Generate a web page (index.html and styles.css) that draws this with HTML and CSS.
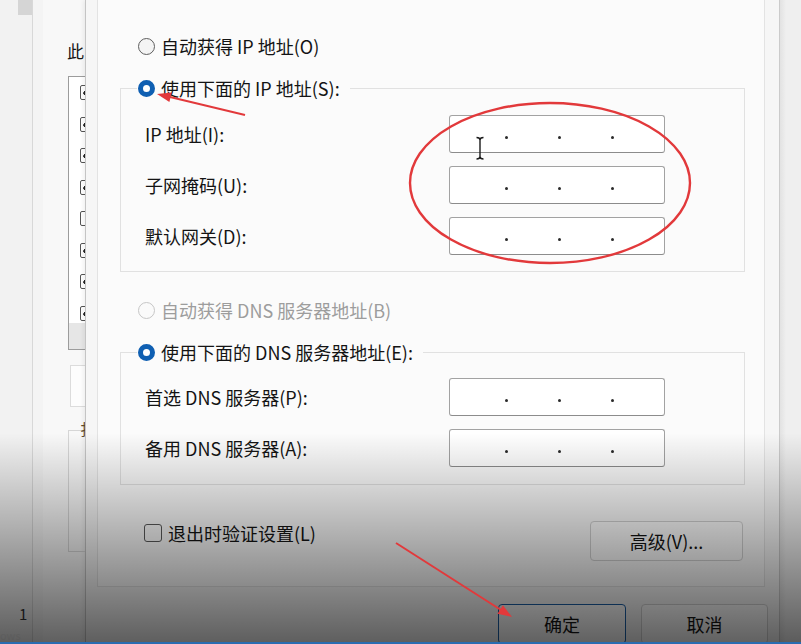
FILE: index.html
```html
<!DOCTYPE html>
<html lang="zh-CN">

<head>
    <meta charset="UTF-8">
    <title>Internet 协议版本 4 (TCP/IPv4) 属性</title>
    <link rel="stylesheet" href="styles.css">
</head>

<body>
    <div class="screen">
        <div class="main">
            <!-- window behind the dialog -->
            <div class="backwin">
                <div class="strip">
                    <span class="thumb"></span>
                    <span class="num">1</span>
                    <span class="ows">ows</span>
                </div>
                <div class="backpage">
                    <div class="backtitle">此</div>
                    <div class="backlist">
                        <span class="cb on"></span>
                        <span class="cb on"></span>
                        <span class="cb on"></span>
                        <span class="cb on"></span>
                        <span class="cb"></span>
                        <span class="cb on"></span>
                        <span class="cb on"></span>
                        <span class="cb on"></span>
                        <div class="hscroll"></div>
                    </div>
                    <div class="backbtn"></div>
                    <div class="backgroup"><span class="backglyph">扌</span></div>
                </div>
            </div>

            <div class="dialog">
                <div class="page">
                    <label class="opt"><span class="radio"></span>自动获得 IP 地址(O)</label>

                    <fieldset class="group">
                        <legend><label class="opt"><span class="radio on"></span>使用下面的 IP 地址(S):</label></legend>
                        <div class="rows">
                            <span class="lbl">IP 地址(I):</span>
                            <div class="ip"><span class="seg lead"></span><span class="dot"></span><span class="seg"></span><span class="dot"></span><span class="seg"></span><span class="dot"></span></div>
                            <span class="lbl">子网掩码(U):</span>
                            <div class="ip"><span class="seg lead"></span><span class="dot"></span><span class="seg"></span><span class="dot"></span><span class="seg"></span><span class="dot"></span></div>
                            <span class="lbl">默认网关(D):</span>
                            <div class="ip"><span class="seg lead"></span><span class="dot"></span><span class="seg"></span><span class="dot"></span><span class="seg"></span><span class="dot"></span></div>
                        </div>
                    </fieldset>

                    <label class="opt dim gap"><span class="radio off"></span>自动获得 DNS 服务器地址(B)</label>

                    <fieldset class="group">
                        <legend><label class="opt"><span class="radio on"></span>使用下面的 DNS 服务器地址(E):</label></legend>
                        <div class="rows dns">
                            <span class="lbl">首选 DNS 服务器(P):</span>
                            <div class="ip"><span class="seg lead"></span><span class="dot"></span><span class="seg"></span><span class="dot"></span><span class="seg"></span><span class="dot"></span></div>
                            <span class="lbl">备用 DNS 服务器(A):</span>
                            <div class="ip"><span class="seg lead"></span><span class="dot"></span><span class="seg"></span><span class="dot"></span><span class="seg"></span><span class="dot"></span></div>
                        </div>
                    </fieldset>

                    <div class="foot">
                        <label class="check"><span class="box"></span>退出时验证设置(L)</label>
                        <button class="btn adv">高级(V)...</button>
                    </div>
                </div>

                <div class="actions">
                    <button class="btn ok">确定</button>
                    <button class="btn cancel">取消</button>
                </div>
            </div>

            <div class="desk"></div>
        </div>
        <div class="progress"></div>

        <div class="shade"></div>

        <!-- red annotations drawn over the video -->
        <svg class="marks" width="801" height="644" viewBox="0 0 801 644">
            <ellipse cx="550" cy="183" rx="140" ry="80" fill="none" stroke="#e2393b" stroke-width="2.4" />
            <line x1="245" y1="115" x2="170" y2="97" stroke="#e2393b" stroke-width="2" />
            <polygon points="157,94 171.8,92.4 169.4,102.1" fill="#e2393b" />
            <line x1="396" y1="543" x2="501" y2="610" stroke="#e2393b" stroke-width="2" />
            <polygon points="512,617 497.5,613.7 502.9,605.3" fill="#e2393b" />
            <path d="M476.5 137.5 q3.5 0 3.5 2.5 v16.5 q0 2.5 -3.5 2.5 M483.5 137.5 q-3.5 0 -3.5 2.5 M483.5 159 q-3.5 0 -3.5 -2.5" fill="none" stroke="#1a1a1a" stroke-width="1.4" />
        </svg>
    </div>
</body>

</html>
```

FILE: styles.css
```css
body {
    margin: 0;
}

.screen {
    width: 801px;
    height: 644px;
    position: relative;
    overflow: hidden;
    display: flex;
    flex-direction: column;
    background: #ebebeb;
    font-family: "Noto Sans CJK SC", sans-serif;
    color: #141414;
}

.main {
    display: flex;
    height: 642px;
}

.progress {
    height: 2px;
    background: #2a6cb0;
    position: relative;
    z-index: 2;
}

/* window behind */
.backwin {
    width: 85px;
    flex: none;
    display: flex;
    overflow: hidden;
}

.strip {
    width: 32px;
    flex: none;
    background: #f2f2f2;
    border-right: 1px solid #d8d8d8;
    display: flex;
    flex-direction: column;
}

.thumb {
    width: 14px;
    height: 15px;
    margin-left: 18px;
    background: #d5d5d5;
}

.num {
    margin-top: auto;
    margin-left: 19px;
    font-size: 15px;
    line-height: 20px;
    color: #333;
}

.ows {
    font-size: 11px;
    line-height: 14px;
    margin-top: 4px;
    color: #e6e6e6;
}

.backpage {
    flex: 1;
    background: #f8f8f8;
    border-left: 10px solid #f4f4f4;
    padding: 40px 0 0 25px;
}

.backtitle {
    font-size: 17px;
    line-height: 21px;
    margin-left: -1px;
}

.backlist {
    margin-top: 15px;
    width: 120px;
    height: 274px;
    box-sizing: border-box;
    border: 1px solid #9c9c9c;
    background: #fff;
    padding-top: 8px;
    display: flex;
    flex-direction: column;
    gap: 16.5px;
}

.cb {
    width: 15px;
    height: 15px;
    margin-left: 11px;
    box-sizing: border-box;
    border: 1.5px solid #555;
    border-radius: 2px;
    flex: none;
}

.cb.on {
    background: radial-gradient(circle at 35% 55%, #222 0 2px, transparent 2.5px);
}

.hscroll {
    height: 26px;
    margin-top: -14px;
    background: #e6e6e6;
}

.backbtn {
    margin: 15px 0 0 2px;
    width: 100px;
    height: 42px;
    box-sizing: border-box;
    border: 1px solid #dcdcdc;
    background: #fdfdfd;
}

.backgroup {
    margin-top: 23px;
    width: 16px;
    height: 120px;
    border: 1px solid #d6d6d6;
    position: relative;
}

.backglyph {
    position: absolute;
    top: -11px;
    left: 11px;
    font-size: 15px;
    line-height: 18px;
    color: #5b4a2e;
}

/* dialog */
.dialog {
    width: 695px;
    flex: none;
    box-sizing: border-box;
    background: #f6f6f6;
    border-left: 1px solid #c4c4c4;
    border-right: 1px solid #cbcbcb;
    padding: 0 14px 0 11px;
    display: flex;
    flex-direction: column;
    box-shadow: -2px 0 4px rgba(0, 0, 0, 0.06);
}

.desk {
    flex: 1;
    background: linear-gradient(to right, #e2e2e2, #efefef 6px);
}

.page {
    background: #fbfbfb;
    border: 1px solid #e3e3e3;
    border-top: none;
    padding: 35px 19px 25px 22px;
}

.opt {
    display: flex;
    align-items: center;
    gap: 6px;
    height: 22px;
    font-size: 18px;
    line-height: 22px;
    margin-left: 18px;
    white-space: nowrap;
}

.opt.gap {
    margin-top: 27px;
}

.opt.dim {
    color: #9d9d9d;
}

.radio {
    width: 17px;
    height: 17px;
    flex: none;
    box-sizing: border-box;
    border-radius: 50%;
    border: 1.5px solid #5e5e5e;
    background: #f4f4f4;
}

.radio.on {
    border: 5.5px solid #0f5fb2;
    background: #fff;
}

.radio.off {
    border-color: #c6c6c6;
    background: #fafafa;
}

.group {
    margin: 20px 0 0;
    padding: 0;
    border: 1px solid #e1e1e1;
    min-width: 0;
}

.group legend {
    margin-left: 16px;
    padding: 0 10px 0 1px;
}

.group legend .opt {
    margin-left: 0;
}

.rows {
    display: grid;
    grid-template-columns: 304px 216px;
    row-gap: 13px;
    align-items: center;
    padding: 16px 0 16px 24px;
}

.rows.dns {
    padding: 15px 0 17px 24px;
}

.lbl {
    font-size: 18px;
    line-height: 22px;
}

.ip {
    height: 38px;
    box-sizing: border-box;
    border: 1px solid #a2a2a2;
    border-bottom-color: #8c8c8c;
    border-radius: 3px;
    background: #fff;
    display: flex;
    align-items: center;
}

.seg {
    width: 50px;
    flex: none;
}

.seg.lead {
    width: 54.5px;
}

.dot {
    width: 3px;
    height: 3px;
    margin-top: 6px;
    border-radius: 50%;
    background: #2a2a2a;
    flex: none;
}

.foot {
    display: flex;
    justify-content: space-between;
    align-items: flex-start;
    margin-top: 36px;
}

.check {
    display: flex;
    align-items: center;
    gap: 6px;
    height: 24px;
    margin-left: 24px;
    font-size: 18px;
}

.box {
    width: 18px;
    height: 18px;
    box-sizing: border-box;
    border: 1.5px solid #5a5a5a;
    border-radius: 3px;
    background: #fafafa;
}

.btn {
    height: 40px;
    box-sizing: border-box;
    border: 1px solid #d2d2d2;
    border-radius: 4px;
    background: #fdfdfd;
    font-family: "Noto Sans CJK SC", sans-serif;
    font-size: 18px;
    color: #141414;
    padding: 0;
}

.adv {
    width: 153px;
    margin-right: 2px;
}

.actions {
    display: flex;
    justify-content: flex-end;
    gap: 15px;
    margin: 17px -3px 0 0;
}

.ok {
    width: 128px;
    border: 1.5px solid #1b5fa6;
}

.cancel {
    width: 127px;
}

/* video gradient and annotations */
.shade {
    position: absolute;
    inset: 0;
    background: linear-gradient(to bottom, rgba(0, 0, 0, 0) 433px, rgba(0, 0, 0, 0.62) 644px);
    pointer-events: none;
    z-index: 1;
}

.marks {
    position: absolute;
    top: 0;
    left: 0;
    pointer-events: none;
    z-index: 3;
}
```
